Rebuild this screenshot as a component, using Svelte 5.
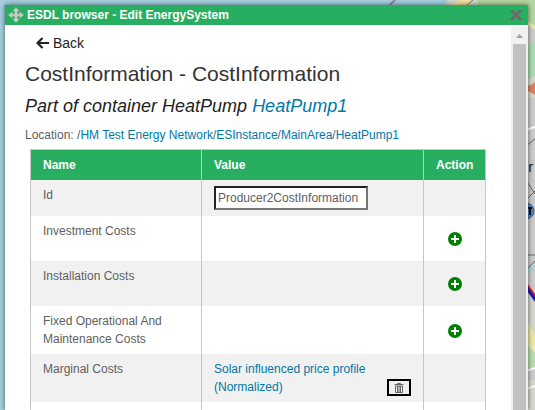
<script>
  let id = $state('Producer2CostInformation');
  const path = ['HM Test Energy Network', 'ESInstance', 'MainArea', 'HeatPump1'];
  const costs = ['Investment Costs', 'Installation Costs', 'Fixed Operational And Maintenance Costs'];
</script>

<div class="page">
  <svg class="map" viewBox="0 0 535 410" preserveAspectRatio="xMaxYMin slice" aria-hidden="true">
    <rect width="535" height="410" fill="#a6d0df" />
    <path d="M448 0h87v410h-12V8h-80z" fill="#d5d8cb" />
    <path d="M478 0h57v30l-22-25h-35z" fill="#b5d6a0" />
    <path d="M389 6l8-8" stroke="#9c7fae" stroke-width="2" />
    <path d="M448 6l12-6h14l-8 7z" fill="#f4e3a0" />
    <path d="M466 6l8-7" stroke="#666" stroke-width="1" />
    <path d="M526 26l9 4v30l-9-4z" fill="#cdcbca" />
    <path d="M526 46l9-4v34l-9 4z" fill="#a9dcb4" />
    <path d="M526 22l10 6M526 116l10-5M526 236l10 4" stroke="#eeeaa0" stroke-width="3" />
    <path d="M526 86l5-1 4-3v13l-5-3-4-2z" fill="#e07f62" />
    <path d="M526 98h9v60h-9zM526 158h9v137h-9zM526 368h9v12h-9z" fill="#cbcbcb" />
    <path d="M526 130l9-3" stroke="#fff" stroke-width="2" />
    <path d="M526 146l9-7M526 180l9 14M526 200l9-9M526 255h9M526 270l9-9" stroke="#666" stroke-width="1" />
    <circle cx="526" cy="211" r="8" fill="#4b87bd" stroke="#345f86" />
    <path d="M527 208h5M530 208v7" stroke="#111" stroke-width="2" />
    <text x="520" y="172" font-size="15" fill="#222">er</text>
    <path d="M526 274l9-9" stroke="#a8d4e2" stroke-width="3" />
    <path d="M526 284l10 14" stroke="#e01818" stroke-width="3" />
    <path d="M526 287l10 14" stroke="#1717c8" stroke-width="3" />
    <path d="M526 320l9 15v18l-9-10z" fill="#eee8a2" />
    <path d="M526 345l9 8v15h-9z" fill="#b8dfaa" />
    <path d="M526 371l9-3M526 389l9-3" stroke="#fff" stroke-width="2" />
  </svg>

  <section class="window">
    <header class="titlebar">
      <svg width="16" height="16" viewBox="0 0 16 16" aria-hidden="true">
        <path d="M8 .5l3 3.500H9v3h3V5l3.500 3-3.500 3V9H9v3h2l-3 3.500L5 12h2V9H4v2L.5 8 4 5v2h3V4H5z" fill="#c6cfc8" stroke="#b3bfb6" stroke-width=".8" />
      </svg>
      <strong>ESDL browser - Edit EnergySystem</strong>
      <button class="close" aria-label="Close">
        <svg width="12" height="12" viewBox="0 0 12 12"><path d="M2 2l8 8M10 2l-8 8" stroke="#6b6b6b" stroke-width="3" stroke-linecap="round" /></svg>
      </button>
    </header>

    <div class="body">
      <main>
        <a class="back" href="#back">
          <svg width="13" height="12" viewBox="0 0 13 12" aria-hidden="true"><path d="M6.500 1L1.500 6l5 5M2 6h11" fill="none" stroke="#222" stroke-width="2.200" /></svg>
          Back
        </a>
        <h1>CostInformation - CostInformation</h1>
        <h2>Part of container HeatPump <a href="#HeatPump1">HeatPump1</a></h2>
        <p>Location: {#each path as part}/<a href="#{part}">{part}</a>{/each}</p>

        <table>
          <colgroup><col class="name" /><col /><col class="action" /></colgroup>
          <thead>
            <tr><th>Name</th><th>Value</th><th>Action</th></tr>
          </thead>
          <tbody>
            <tr class="short">
              <td><label for="cost-id">Id</label></td>
              <td><input id="cost-id" type="text" bind:value={id} /></td>
              <td></td>
            </tr>
            {#each costs as cost}
              <tr>
                <td>{cost}</td>
                <td></td>
                <td class="act">
                  <button class="add" aria-label="Add {cost}">
                    <svg width="14" height="14" viewBox="0 0 14 14"><circle cx="7" cy="7" r="7" fill="#008000" /><path d="M7 3v8M3 7h8" stroke="#fff" stroke-width="2" /></svg>
                  </button>
                </td>
              </tr>
            {/each}
            <tr>
              <td>Marginal Costs</td>
              <td>
                <div class="value">
                  <a href="#profile">Solar influenced price profile (Normalized)</a>
                  <button class="trash" aria-label="Delete profile">
                    <svg width="10" height="10" viewBox="0 0 10 10"><path d="M3.500 1V.5h3V1M.5 1.500h9M1.500 3v6.500h7V3zM3.500 3v6M5 3v6M6.500 3v6" fill="none" stroke="#666" /></svg>
                  </button>
                </div>
              </td>
              <td></td>
            </tr>
            <tr><td></td><td></td><td></td></tr>
          </tbody>
        </table>
      </main>
      <div class="scrollbar" aria-hidden="true">
        <svg width="17" height="17" viewBox="0 0 17 17"><path d="M5 11l3.500-4 3.500 4z" fill="#a0a0a0" /></svg>
        <div class="thumb"></div>
      </div>
    </div>
  </section>
</div>

<style>
  .page {
    position: relative;
    display: flex;
    box-sizing: border-box;
    height: 100vh;
    padding: 5px 7px 0 5px;
    overflow: hidden;
    font: 12px/18px "Liberation Sans", Arial, sans-serif;
    color: #606060;
  }
  .map {
    position: absolute;
    inset: 0;
    width: 100%;
    height: 100%;
  }
  .window {
    position: relative;
    flex: 1;
    display: flex;
    flex-direction: column;
    background: #fff;
    box-shadow: 0 0 5px rgba(0, 0, 0, 0.6);
  }
  .titlebar {
    display: flex;
    align-items: center;
    gap: 3px;
    height: 20px;
    padding: 0 6px 0 3px;
    background: #28ae61;
    color: #fff;
  }
  .titlebar strong { flex: 1; }
  button {
    display: inline-flex;
    align-items: center;
    justify-content: center;
    padding: 0;
    border: 0;
    background: none;
    cursor: pointer;
  }
  a {
    color: #0078a8;
    text-decoration: none;
  }
  .body {
    flex: 1;
    display: flex;
    min-height: 0;
    padding-top: 2px;
  }
  main {
    flex: 1;
    min-width: 0;
    padding: 6px 25px 0 20px;
  }
  .back {
    display: flex;
    align-items: center;
    gap: 4px;
    margin-left: 11px;
    font-size: 14px;
    line-height: 20px;
    color: #222;
  }
  h1, h2 {
    margin: 0;
    font-weight: 400;
    color: #333;
  }
  h1 {
    padding-top: 9px;
    font-size: 21px;
    line-height: 24px;
  }
  h2 {
    padding-top: 8px;
    font-size: 18px;
    font-style: italic;
    line-height: 24px;
    color: #222;
  }
  p {
    margin: 8px 0 5px;
  }
  table {
    width: calc(100% - 5px);
    margin-left: 5px;
    border-collapse: collapse;
    table-layout: fixed;
    border: 1px solid #c6c6c6;
  }
  .name { width: 171px; }
  .action { width: 62px; }
  th, td {
    box-sizing: border-box;
    padding: 6px 12px;
    border-left: 1px solid #c6c6c6;
    text-align: left;
    vertical-align: top;
  }
  th {
    height: 30px;
    background: #28ae61;
    color: #fff;
  }
  td { height: 45px; }
  .short td { height: 36px; }
  tbody tr:nth-child(odd) { background: #f1f1f1; }
  .act {
    padding: 0;
    text-align: center;
    vertical-align: middle;
  }
  td:not(.act) { padding-right: 12px; }
  tbody .act { padding: 0; }
  .add { vertical-align: middle; }
  input {
    display: block;
    box-sizing: border-box;
    width: 154px;
    height: 24px;
    padding: 1px 2px;
    border: 2px inset #767676;
    background: #fff;
    font: inherit;
    color: #606060;
  }
  .value {
    display: flex;
    align-items: flex-end;
    justify-content: space-between;
  }
  .trash {
    flex: none;
    width: 24px;
    height: 17px;
    border: 2px solid #000;
  }
  .scrollbar {
    display: flex;
    flex-direction: column;
    width: 17px;
    background: #f1f1f1;
  }
  .thumb {
    flex: 1;
    margin: 0 2px;
    background: #c1c1c1;
  }
</style>
